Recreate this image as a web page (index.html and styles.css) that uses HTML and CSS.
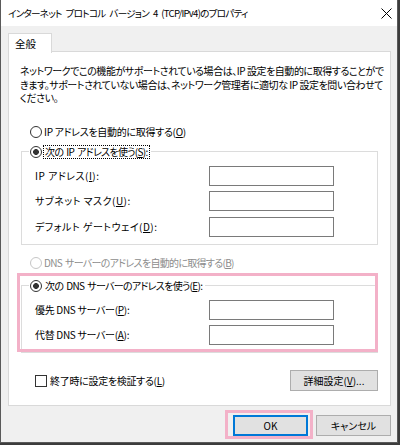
FILE: index.html
```html
<!DOCTYPE html>
<html lang="ja">
<head>
<meta charset="utf-8">
<title>TCP/IPv4 のプロパティ</title>
<link rel="stylesheet" href="styles.css">
</head>
<body>
<div class="window">
  <div class="titlebar">
    <span class="title">インターネット プロトコル バージョン 4 (TCP/IPv4)のプロパティ</span>
    <svg class="close" width="11" height="11" viewBox="0 0 11 11"><path d="M0.5 0.5L10.5 10.5M10.5 0.5L0.5 10.5" stroke="#000" stroke-width="1" fill="none"/></svg>
  </div>
  <div class="client">
    <div class="tabs"><div class="tab">全般</div></div>
    <div class="panel">
      <p class="intro">ネットワークでこの機能がサポートされている場合は、IP 設定を自動的に取得することがで<br>きます。サポートされていない場合は、ネットワーク管理者に適切な IP 設定を問い合わせて<br>ください。</p>

      <div class="radio-row first"><span class="radio"></span><span class="lbl">IP アドレスを自動的に取得する(<u>O</u>)</span></div>

      <div class="group-wrap g1">
        <fieldset class="group">
          <legend><span class="legend-inner"><span class="radio checked"></span><span class="lbl tight focus">次の IP アドレスを使う(<u>S</u>):</span></span></legend>
          <div class="fields">
            <span class="lbl kana">IP アドレス(<u>I</u>):</span><span class="input"></span>
            <span class="lbl kana">サブネット マスク(<u>U</u>):</span><span class="input"></span>
            <span class="lbl kana">デフォルト ゲートウェイ(<u>D</u>):</span><span class="input"></span>
          </div>
        </fieldset>
      </div>

      <div class="radio-row disabled"><span class="radio"></span><span class="lbl tight">DNS サーバーのアドレスを自動的に取得する(<u>B</u>)</span></div>

      <div class="group-wrap g2">
        <fieldset class="group">
          <legend><span class="legend-inner"><span class="radio checked"></span><span class="lbl tight nofocus">次の DNS サーバーのアドレスを使う(<u>E</u>):</span></span></legend>
          <div class="fields">
            <span class="lbl">優先 DNS サーバー(<u>P</u>):</span><span class="input"></span>
            <span class="lbl">代替 DNS サーバー(<u>A</u>):</span><span class="input"></span>
          </div>
        </fieldset>
        <div class="highlight hl-dns"></div>
      </div>

      <div class="verify-row">
        <div class="check-item"><span class="checkbox"></span><span class="lbl">終了時に設定を検証する(<u>L</u>)</span></div>
        <div class="button detail">詳細設定(<u>V</u>)...</div>
      </div>
    </div>

    <div class="dialog-buttons">
      <div class="ok-wrap">
        <div class="button ok">OK</div>
        <div class="highlight hl-ok"></div>
      </div>
      <div class="button cancel">キャンセル</div>
    </div>
  </div>
</div>
</body>
</html>
```

FILE: styles.css
```css
* { box-sizing: border-box; }
html, body { margin: 0; padding: 0; }
body {
  width: 400px;
  height: 445px;
  overflow: hidden;
  background: #3c3c3c;
  font-family: "Noto Sans CJK JP", "Noto Sans", sans-serif;
  font-size: 10px;
  letter-spacing: -0.3px;
  font-feature-settings: "palt";
  color: #000;
}
u { text-decoration: underline; text-underline-offset: 1px; }

.window {
  width: 398px;
  height: 443px;
  background: #f0f0f0;
  border-left: 1px solid #5a5a5a;
  border-right: 1px solid #5a5a5a;
  border-bottom: 1px solid #5a5a5a;
  display: flex;
  flex-direction: column;
}
.titlebar {
  height: 26px;
  flex: none;
  background: #fff;
  display: flex;
  align-items: center;
  justify-content: space-between;
  padding: 0 5px 0 7px;
}
.title { font-size: 9.6px; line-height: 14px; letter-spacing: -0.75px; word-spacing: 2.5px; }
.close { display: block; }

.client {
  padding: 7px 6px 0 7px;
  display: flex;
  flex-direction: column;
}
.tabs { display: flex; height: 19px; margin-bottom: -1px; }
.tab {
  position: relative;
  z-index: 1;
  width: 44px;
  height: 20px;
  border: 1px solid #d9d9d9;
  border-bottom: none;
  background: #fff;
  padding-left: 6px;
  line-height: 19px;
  letter-spacing: 0;
  font-size: 10.5px;
}
.panel {
  height: 355px;
  border: 1px solid #d9d9d9;
  background: #fff;
  padding: 12px 12px 0 12px;
}
.intro {
  margin: 0 0 0 -1px;
  line-height: 13.5px;
  white-space: nowrap;
  letter-spacing: -0.45px;
}
.lbl { line-height: 12px; white-space: nowrap; }
.kana { letter-spacing: 0.5px; }
.tight { letter-spacing: -0.7px; word-spacing: 1.5px; }

.radio-row {
  display: flex;
  align-items: center;
  gap: 2px;
  height: 14px;
  padding-left: 9px;
}
.radio-row.first { margin-top: 20px; }
.radio {
  width: 12px;
  height: 12px;
  border: 1px solid #333;
  border-radius: 50%;
  background: #fff;
  flex: none;
}
.radio.checked { background: radial-gradient(circle, #333 0 2.6px, #fff 3.2px); }
.radio-row.disabled { color: #8d8d8d; margin-top: 11px; }
.radio-row.disabled .radio { border-color: #c6c6c6; }

.group-wrap { position: relative; }
.g1 { margin-top: 6px; }
.g2 { margin-top: 9px; }
.group {
  margin: 0;
  min-width: 0;
  border: 1px solid #dcdcdc;
  padding: 0 0 7px 13px;
}
legend {
  margin-left: -6px;
  padding: 0 1px;
}
.legend-inner {
  display: flex;
  align-items: center;
  gap: 1px;
  height: 14px;
}
.focus { border: 1px dotted #000; padding: 0 1px; height: 14px; line-height: 12px; }
.nofocus { border: 1px solid transparent; padding: 0 1px; height: 14px; line-height: 12px; }

.fields {
  margin-top: 7px;
  display: grid;
  grid-template-columns: 174px 125px;
  row-gap: 5.5px;
  align-items: center;
}
.input {
  height: 20px;
  border: 1px solid #7a7a7a;
  background: #fff;
}

.highlight {
  position: absolute;
  border: 3px solid #f3b1c8;
  pointer-events: none;
}
.hl-dns { left: -4px; right: 0; top: -6px; bottom: 1px; }

.verify-row {
  margin-top: 17px;
  display: flex;
  align-items: center;
  justify-content: space-between;
}
.check-item { display: flex; align-items: center; gap: 3px; padding-left: 14px; }
.checkbox {
  width: 12px;
  height: 12px;
  border: 1px solid #333;
  background: #fff;
}
.button {
  height: 21px;
  background: #e1e1e1;
  border: 1px solid #adadad;
  display: flex;
  align-items: center;
  justify-content: center;
  line-height: 12px;
  white-space: nowrap;
  letter-spacing: 0;
}
.detail { width: 88px; }

.dialog-buttons {
  margin-top: 9px;
  display: flex;
  justify-content: flex-end;
  gap: 8px;
}
.ok-wrap { position: relative; }
.ok, .cancel { width: 75px; }
.ok { border-color: #0078d7; box-shadow: inset 0 0 0 1px #0078d7; }
.hl-ok { left: -8px; right: -5px; top: -5px; bottom: -3px; }
```
